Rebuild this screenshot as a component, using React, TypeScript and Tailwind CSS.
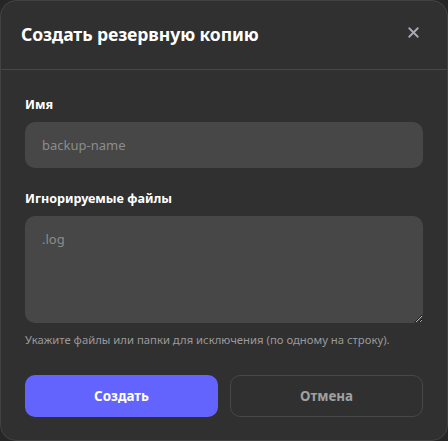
import { X } from 'lucide-react'

const BackupDialog = () => {
    return (
        <div className="flex h-[441px] w-[448px] flex-col rounded-[16px] border border-[#424242] bg-[#303030] text-white" style={{ fontFamily: '"Noto Sans", "Open Sans", sans-serif' }}>
            <div className="flex h-[69px] shrink-0 items-center justify-between border-b border-[#474747] pl-[20px] pr-[25px]">
                <h2 className="text-[17.6px] font-bold leading-none tracking-[-0.1px]">Создать резервную копию</h2>
                <button className="-mt-[6px] text-[#a8aab6]">
                    <X size={17} strokeWidth={2.6} />
                </button>
            </div>

            <div className="flex flex-col px-[24px] pt-[27px]">
                <label className="mb-[9px] text-[12.6px] font-bold leading-[16px]">Имя</label>
                <input
                    className="h-[46px] rounded-[10px] bg-[#474747] px-[17px] text-[13px] text-white outline-none placeholder:text-[#8c8c8c]"
                    placeholder="backup-name"
                />

                <label className="mb-[9px] mt-[23px] text-[12.6px] font-bold leading-[16px]">Игнорируемые файлы</label>
                <textarea
                    className="h-[107px] rounded-[10px] bg-[#474747] px-[17px] py-[14px] text-[13px] text-white outline-none placeholder:text-[#8c8c8c]"
                    placeholder=".log"
                />
                <p className="mt-[9px] whitespace-nowrap text-[11.3px] leading-[16px] text-[#9a9a9a]">Укажите файлы или папки для исключения (по одному на строку).</p>

                <div className="mt-[27px] grid grid-cols-2 gap-[12px]">
                    <button className="h-[42px] rounded-[10px] bg-[#6363fd] text-[13.4px] font-bold text-white">Создать</button>
                    <button className="h-[42px] rounded-[10px] border border-[#474747] text-[13.4px] font-bold text-[#a0a0a0]">Отмена</button>
                </div>
            </div>
        </div>
    )
}

export default function App() {
    return (
        <div className="h-[441px] w-[448px] bg-[#262626]">
            <BackupDialog />
        </div>
    )
}
